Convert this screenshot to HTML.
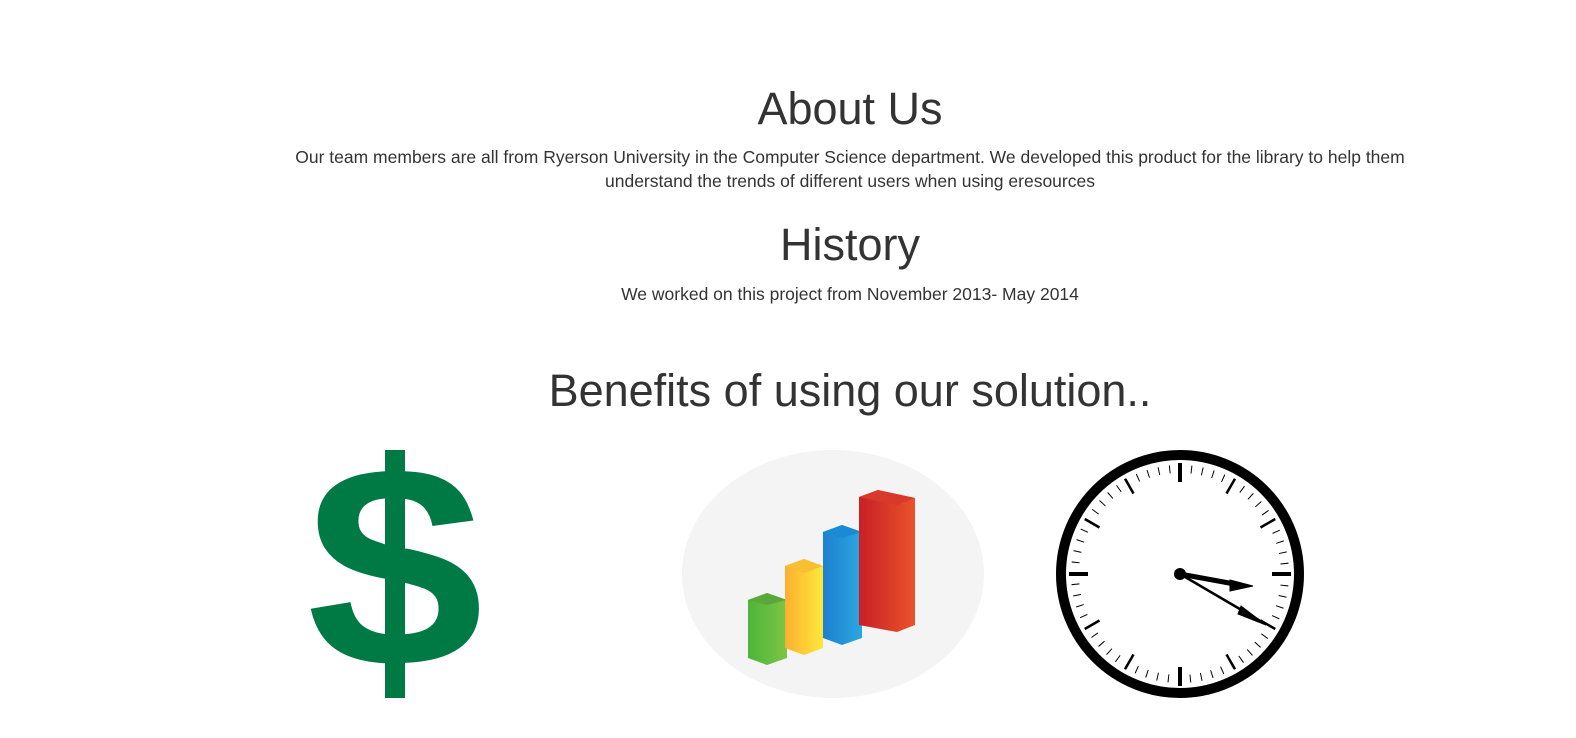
<!DOCTYPE html>
<html><head><meta charset="utf-8"><style>
html,body{margin:0;background:#fff;font-family:"Liberation Sans",sans-serif;color:#333;width:1576px;height:738px;overflow:hidden;position:relative}
.c{position:absolute;left:280px;width:1140px;text-align:center}
h1{font-weight:400;margin:0;line-height:1.1}
p{margin:0;font-size:17.5px;line-height:24px}
</style></head><body>
<div class="c" style="top:84px"><h1 style="font-size:45px">About Us</h1></div>
<div class="c" style="top:145px"><p>Our team members are all from Ryerson University in the Computer Science department. We developed this product for the library to help them understand the trends of different users when using eresources</p></div>
<div class="c" style="top:220px"><h1 style="font-size:45px">History</h1></div>
<div class="c" style="top:282px"><p>We worked on this project from November 2013- May 2014</p></div>
<div class="c" style="top:366px"><h1 style="font-size:45px">Benefits of using our solution..</h1></div>
<svg style="position:absolute;left:0;top:0" width="1576" height="738">
<rect x="385" y="450" width="20" height="248" fill="#007a45"/>
<text x="395" y="670" text-anchor="middle" font-family="Liberation Sans" font-weight="bold" font-size="300" fill="#007a45" transform="translate(395 574) scale(1.06 0.96) translate(-395 -574)">$</text>
<ellipse cx="833" cy="574" rx="151" ry="124" fill="#f3f4f3"/>
<defs>
<linearGradient id="g" x1="0" x2="1"><stop offset="0" stop-color="#4db53a"/><stop offset="1" stop-color="#7cc545"/></linearGradient>
<linearGradient id="y" x1="0" x2="1"><stop offset="0" stop-color="#fbb030"/><stop offset="1" stop-color="#fde83a"/></linearGradient>
<linearGradient id="b" x1="0" x2="1"><stop offset="0" stop-color="#1e7fd0"/><stop offset="1" stop-color="#2aa8e0"/></linearGradient>
<linearGradient id="r" x1="0" x2="1"><stop offset="0" stop-color="#c91f26"/><stop offset="1" stop-color="#e8532a"/></linearGradient>
</defs>
<polygon points="748,600 767,593 787,600 787,658 767,665 748,658" fill="url(#g)"/><polygon points="748,600 767,593 787,600 767,605" fill="#5aa83a"/>
<polygon points="785,566 804,559 823,566 823,648 804,655 785,648" fill="url(#y)"/><polygon points="785,566 804,559 823,566 804,573" fill="#f7c030"/>
<polygon points="823,532 842,525 862,532 862,638 842,645 823,638" fill="url(#b)"/><polygon points="823,532 842,525 862,532 842,538" fill="#1a8ad6"/>
<polygon points="859,497 878,490 915,498 915,625 897,632 859,625" fill="url(#r)"/><polygon points="859,497 878,490 915,498 897,505" fill="#d9392a"/>
<circle cx="1180" cy="574" r="119" fill="#fff" stroke="#000" stroke-width="10"/>
<circle cx="1180" cy="574" r="105" fill="none" stroke-width="8" stroke-dasharray="1 9.995" transform="rotate(-90 1180 574)" stroke="#000"/>
<circle cx="1180" cy="574" r="100" fill="#fff"/>
<g stroke="#000">
<line x1="1180" y1="463" x2="1180" y2="482" stroke-width="4"/>
<line x1="1180" y1="667" x2="1180" y2="686" stroke-width="4"/>
<line x1="1069" y1="574" x2="1088" y2="574" stroke-width="4"/>
<line x1="1272" y1="574" x2="1291" y2="574" stroke-width="4"/>
<g stroke-width="2.5" transform="rotate(30 1180 574)"><line x1="1180" y1="464" x2="1180" y2="481"/><line x1="1180" y1="667" x2="1180" y2="684"/></g>
<g stroke-width="2.5" transform="rotate(60 1180 574)"><line x1="1180" y1="464" x2="1180" y2="481"/><line x1="1180" y1="667" x2="1180" y2="684"/></g>
<g stroke-width="2.5" transform="rotate(120 1180 574)"><line x1="1180" y1="464" x2="1180" y2="481"/><line x1="1180" y1="667" x2="1180" y2="684"/></g>
<g stroke-width="2.5" transform="rotate(150 1180 574)"><line x1="1180" y1="464" x2="1180" y2="481"/><line x1="1180" y1="667" x2="1180" y2="684"/></g>
<line x1="1180" y1="574" x2="1240" y2="585" stroke-width="5"/>
<path d="M1230 580 L1253 586 L1230 591 Z"/>
<line x1="1180" y1="574" x2="1262" y2="622" stroke-width="2.5"/>
<path d="M1241 606 L1266 625 L1238 614 Z"/>
</g>
<circle cx="1180" cy="574" r="6" fill="#000"/>
</svg>
</body></html>
